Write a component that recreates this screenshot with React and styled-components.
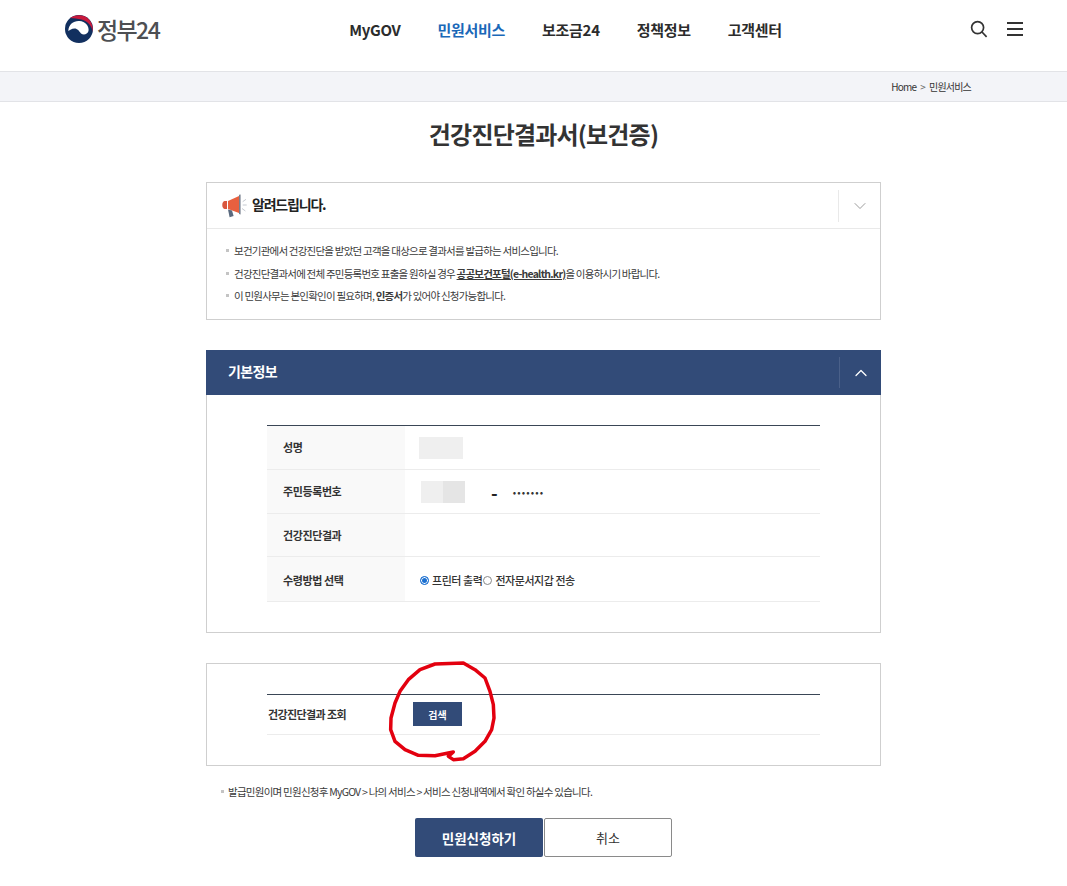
import React from 'react'
import styled, { createGlobalStyle } from 'styled-components'
import { ChevronDown, ChevronUp } from 'lucide-react'

const Global = createGlobalStyle`
    html, body {
        margin: 0;
        padding: 0;
        background: #fff;
        color: #333;
        font-family: "Noto Sans CJK KR", "Noto Sans", sans-serif;
    }
    * {
        box-sizing: border-box;
    }
`

const navItems = ['MyGOV', '민원서비스', '보조금24', '정책정보', '고객센터']

const Logo = () => (
    <LogoWrap>
        <svg width="30" height="30" viewBox="0 0 30 30">
            <circle cx="15" cy="15" r="14" fill="#12305f" />
            <path d="M6.4 4 C10 1 16 .4 20.5 2.2 C26 4.6 29.6 10.5 28.8 18 C28 12 23.5 7 17.5 5.6 C13.5 4.6 9.5 4.2 6.4 4 Z" fill="#c8193c" />
            <path d="M4.3 17 C4.5 10 10 6.5 15.5 7 C21 7.5 25.5 12 24.5 17 C23.5 20.5 19.5 21.5 17 19.5 C15 17 13.5 14.5 10.5 14.5 C7.5 14.5 6 16 4.3 17 Z" fill="#fff" />
        </svg>
        <LogoText>정부24</LogoText>
    </LogoWrap>
)

const Megaphone = () => (
    <svg width="26" height="24" viewBox="0 0 26 24">
        <path d="M6 7 L3.5 7 C0.5 7.5 0.5 14.5 3.5 15 L6 15 Z" fill="#d9573f" />
        <path d="M7 7 L18 2 L18 19 L7 15 Z" fill="#e8603f" />
        <path d="M18 .8 L19.6 .4 L19.6 20.4 L18 20 Z" fill="#77808f" />
        <path d="M7 15.5 L11 16.5 L12.6 22 L8.6 23.2 Z" fill="#5a6a7f" />
        <path d="M21.7 7.7 L25 5.3 M21.7 11 L25.7 11 M21 14.5 L24.4 17" stroke="#c5c9d0" strokeWidth="1" />
    </svg>
)

const App = () => {
    return (
        <Page>
            <Global />
            <Header>
                <Logo />
                <Nav>
                    {navItems.map((v, i) => (
                        <NavItem key={v} $active={i === 1}>{v}</NavItem>
                    ))}
                </Nav>
                <HeaderIcons>
                    <svg width="18" height="18" viewBox="0 0 18 18" fill="none" stroke="#333" strokeWidth="1.7">
                        <circle cx="7.6" cy="7.6" r="6" />
                        <path d="M12 12 L16.6 16.8" />
                    </svg>
                    <Burger><i /><i /><i /></Burger>
                </HeaderIcons>
            </Header>
            <Crumbs>
                <span>Home</span>
                <CrumbArrow>&gt;</CrumbArrow>
                <span>민원서비스</span>
            </Crumbs>

            <Content>
                <Title>건강진단결과서(보건증)</Title>
                <Notice>
                    <NoticeHead>
                        <Megaphone />
                        <NoticeTitle>알려드립니다.</NoticeTitle>
                        <NoticeToggle><ChevronDown size={20} strokeWidth={1} color="#888" /></NoticeToggle>
                    </NoticeHead>
                    <NoticeList>
                        <li>보건기관에서 건강진단을 받았던 고객을 대상으로 결과서를 발급하는 서비스입니다.</li>
                        <li>건강진단결과서에 전체 주민등록번호 표출을 원하실 경우 <LinkText>공공보건포털(e-health.kr)</LinkText>을 이용하시기 바랍니다.</li>
                        <li>이 민원사무는 본인확인이 필요하며, <b>인증서</b>가 있어야 신청가능합니다.</li>
                    </NoticeList>
                </Notice>

                <SectionHead>
                    <span>기본정보</span>
                    <SectionToggle><ChevronUp size={20} strokeWidth={1.5} color="#fff" /></SectionToggle>
                </SectionHead>
                <SectionBody>
                    <InfoTable>
                        <Row $h={44}>
                            <Label>성명</Label>
                            <Value><Masked $w={44} /></Value>
                        </Row>
                        <Row $h={44}>
                            <Label>주민등록번호</Label>
                            <Value>
                                <IdMask><Masked $w={22} /><Masked $w={22} $dark /></IdMask>
                                <Dash>-</Dash>
                                <Dots>•••••••</Dots>
                            </Value>
                        </Row>
                        <Row $h={43}>
                            <Label>건강진단결과</Label>
                            <Value />
                        </Row>
                        <Row $h={45}>
                            <Label $low>수령방법 선택</Label>
                            <Value>
                                <Radio $checked />
                                <RadioText>프린터 출력</RadioText>
                                <Radio />
                                <RadioText>전자문서지갑 전송</RadioText>
                            </Value>
                        </Row>
                    </InfoTable>
                </SectionBody>

                <LookupCard>
                    <LookupRow>
                        <LookupLabel>건강진단결과 조회</LookupLabel>
                        <SearchButton>검색</SearchButton>
                    </LookupRow>
                    <Scribble width="115" height="105" viewBox="0 0 345 315" fill="none">
                        <path
                            d="M190 285 L150 293 L100 292 L60 275 L30 250 L17 215 L18 180 L30 135 L45 100 L70 65 L105 35 L150 18 L235 15 L270 35 L300 60 L315 100 L325 140 L327 180 L320 215 L300 250 L270 280 L235 302 L205 305 L190 295 L205 282 Z"
                            stroke="#e3000f"
                            strokeWidth="10.5"
                            strokeLinejoin="round"
                        />
                    </Scribble>
                </LookupCard>

                <FootNote>발급민원이며 민원신청후 MyGOV &gt; 나의 서비스 &gt; 서비스 신청내역에서 확인 하실수 있습니다.</FootNote>
                <Buttons>
                    <Primary>민원신청하기</Primary>
                    <Secondary>취소</Secondary>
                </Buttons>
            </Content>
        </Page>
    )
}

const Page = styled.div`
    width: 1067px;
    height: 886px;
    overflow: hidden;
`
const Header = styled.header`
    position: relative;
    height: 71px;
    padding-left: 64px;
    display: flex;
    align-items: center;
    justify-content: center;
`
const LogoWrap = styled.div`
    position: absolute;
    left: 64px;
    top: 14px;
    display: flex;
    align-items: center;
    gap: 3px;
`
const LogoText = styled.span`
    font-size: 23px;
    font-weight: 500;
    letter-spacing: -1.6px;
    color: #4d4f53;
    line-height: 30px;
`
const Nav = styled.nav`
    display: flex;
    gap: 37px;
    margin-top: -13px;
`
const NavItem = styled.a`
    font-size: 15px;
    font-weight: 700;
    letter-spacing: -0.3px;
    color: ${props => props.$active ? '#1a68b8' : '#2c2c2c'};
`
const HeaderIcons = styled.div`
    position: absolute;
    right: 44px;
    top: 20px;
    display: flex;
    align-items: center;
    gap: 19px;
`
const Burger = styled.div`
    width: 16px;
    display: flex;
    flex-direction: column;
    gap: 4px;
    i {
        display: block;
        height: 2px;
        background: #333;
    }
`
const Crumbs = styled.div`
    height: 31px;
    padding-right: 96px;
    display: flex;
    align-items: center;
    justify-content: flex-end;
    gap: 4px;
    background: #f3f4f8;
    border-top: 1px solid #e2e3e7;
    border-bottom: 1px solid #e2e3e7;
    font-size: 10px;
    letter-spacing: -0.8px;
    color: #333;
`
const CrumbArrow = styled.span`
    color: #666;
`
const Title = styled.h1`
    margin: 0;
    padding-top: 14px;
    height: 80px;
    text-align: center;
    font-size: 24px;
    line-height: 36px;
    font-weight: 700;
    letter-spacing: -0.8px;
    color: #333;
`
const Content = styled.main`
    width: 675px;
    margin-left: 206px;
`
const Notice = styled.section`
    height: 138px;
    border: 1px solid #cfcfcf;
`
const NoticeHead = styled.div`
    height: 46px;
    padding-left: 14px;
    display: flex;
    align-items: center;
    gap: 5px;
    border-bottom: 1px solid #e9e9e9;
`
const NoticeTitle = styled.strong`
    padding-bottom: 3px;
    font-size: 14px;
    font-weight: 700;
    letter-spacing: -1.2px;
    color: #222;
`
const NoticeToggle = styled.div`
    margin-left: auto;
    width: 42px;
    height: 32px;
    display: flex;
    align-items: center;
    justify-content: center;
    border-left: 1px solid #e9e9e9;
`
const NoticeList = styled.ul`
    margin: 0;
    padding: 11px 0 0 19px;
    list-style: none;
    li {
        position: relative;
        padding-left: 8px;
        height: 22.5px;
        font-size: 10.5px;
        line-height: 22px;
        letter-spacing: -0.78px;
        color: #3a3a3a;
        white-space: nowrap;
    }
    li::before {
        content: '';
        position: absolute;
        left: 0;
        top: 9px;
        width: 3px;
        height: 3px;
        background: #c4c4c4;
    }
`
const LinkText = styled.b`
    text-decoration: underline;
    font-weight: 700;
`
const SectionHead = styled.div`
    height: 45px;
    margin-top: 30px;
    padding-left: 22px;
    display: flex;
    align-items: center;
    background: #324b78;
    color: #fff;
    font-size: 14px;
    font-weight: 700;
    letter-spacing: -0.6px;
    span {
        padding-bottom: 4px;
    }
`
const SectionToggle = styled.div`
    margin-left: auto;
    width: 42px;
    height: 31px;
    display: flex;
    align-items: center;
    justify-content: center;
    border-left: 1px solid #4a6089;
`
const SectionBody = styled.section`
    height: 238px;
    padding: 30px 60px 0;
    border: 1px solid #cfcfcf;
    border-top: 0;
`
const InfoTable = styled.div`
    width: 553px;
    border-top: 1px solid #3a4656;
`
const Row = styled.div`
    height: ${props => props.$h}px;
    display: flex;
    border-bottom: 1px solid #ececec;
`
const Label = styled.div`
    width: 138px;
    padding: ${props => props.$low ? '2px 0 0 16px' : '0 0 1px 16px'};
    display: flex;
    align-items: center;
    background: #f9f9f9;
    font-size: 11px;
    font-weight: 700;
    letter-spacing: -0.4px;
    color: #333;
`
const Value = styled.div`
    flex: 1;
    padding-left: 14px;
    display: flex;
    align-items: center;
`
const Masked = styled.span`
    display: block;
    width: ${props => props.$w}px;
    height: 22px;
    background: ${props => props.$dark ? '#e5e5e5' : '#efefef'};
`
const IdMask = styled.span`
    display: flex;
    margin-left: 2px;
`
const Dash = styled.span`
    margin-left: 26px;
    font-size: 18px;
    font-weight: 700;
    line-height: 22px;
    color: #222;
`
const Dots = styled.span`
    margin-left: 15px;
    font-size: 10px;
    letter-spacing: 1.1px;
    color: #333;
`
const Radio = styled.span`
    width: 9px;
    height: 9px;
    border-radius: 50%;
    flex: none;
    margin: 2px 3px 0 1px;
    background: ${props => props.$checked ? '#1a6fd0' : '#fff'};
    border: 1px solid ${props => props.$checked ? '#1a6fd0' : '#888'};
    box-shadow: ${props => props.$checked ? 'inset 0 0 0 1px #fff' : 'none'};
`
const RadioText = styled.span`
    padding-top: 2px;
    font-size: 11px;
    font-weight: 500;
    letter-spacing: -0.45px;
    color: #333;
`
const LookupCard = styled.section`
    position: relative;
    height: 103px;
    margin-top: 30px;
    padding: 30px 60px 0;
    border: 1px solid #cfcfcf;
`
const LookupRow = styled.div`
    width: 553px;
    height: 41px;
    display: flex;
    align-items: center;
    border-top: 1px solid #3a4656;
    border-bottom: 1px solid #ececec;
`
const LookupLabel = styled.div`
    width: 146px;
    padding: 0 0 2px 1px;
    font-size: 11px;
    font-weight: 700;
    letter-spacing: -0.6px;
    color: #333;
`
const SearchButton = styled.button`
    width: 49px;
    height: 24px;
    margin-top: -1px;
    padding: 0;
    border: 0;
    background: #324b78;
    color: #fff;
    font-family: inherit;
    font-size: 10px;
    font-weight: 700;
`
const Scribble = styled.svg`
    position: absolute;
    left: 178px;
    top: -6px;
`
const FootNote = styled.p`
    position: relative;
    margin: 17px 0 0;
    padding-left: 22px;
    height: 18px;
    font-size: 10.5px;
    line-height: 18px;
    letter-spacing: -0.75px;
    color: #3a3a3a;
    white-space: nowrap;
    &::before {
        content: '';
        position: absolute;
        left: 15px;
        top: 7px;
        width: 3px;
        height: 3px;
        background: #c4c4c4;
    }
`
const Buttons = styled.div`
    margin-top: 17px;
    display: flex;
    justify-content: center;
    gap: 1px;
`
const Primary = styled.button`
    width: 128px;
    height: 39px;
    padding: 0;
    border: 0;
    border-radius: 2px;
    background: #324b78;
    color: #fff;
    font-family: inherit;
    font-size: 13.5px;
    font-weight: 700;
`
const Secondary = styled.button`
    width: 128px;
    height: 39px;
    padding: 0;
    border: 1px solid #8a8a8a;
    border-radius: 2px;
    background: #fff;
    color: #333;
    font-family: inherit;
    font-size: 13px;
    font-weight: 400;
`

export default App
